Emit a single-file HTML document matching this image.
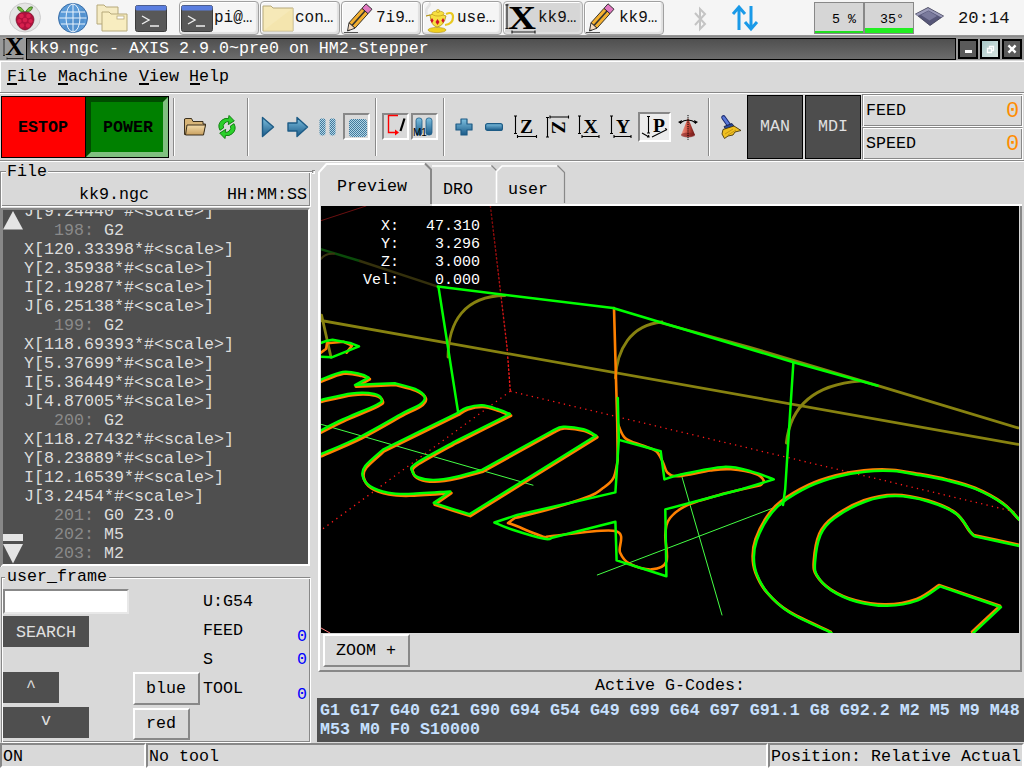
<!DOCTYPE html>
<html><head><meta charset="utf-8">
<style>
*{margin:0;padding:0;box-sizing:border-box}
html,body{width:1024px;height:768px;overflow:hidden;background:#d9d9d9;position:relative;font-family:"Liberation Mono",monospace;font-size:16.67px;color:#000}
.a{position:absolute}
.t{position:absolute;white-space:pre;line-height:1}
svg{position:absolute;overflow:visible}
.tb{position:absolute;top:1px;height:34px;background:#f5f5f5;border:1px solid #a0a0a0;border-radius:4px;box-shadow:inset -2px -2px 1px #e0e0e0, inset 1px 1px 0 #fff}
.tbt{position:absolute;top:10px;font-size:16px;color:#111;white-space:pre;line-height:1}
</style></head><body>
<!-- ===== taskbar ===== -->
<div class="a" style="left:0;top:0;width:1024px;height:35px;background:#f5f5f5"></div>
<div class="a" style="left:0;top:35px;width:1024px;height:3px;background:linear-gradient(#9a9a9a,#7a7a7a)"></div>
<!-- raspberry -->
<svg style="left:9px;top:3px" width="32" height="29" viewBox="0 0 32 29">
 <ellipse cx="16" cy="14.5" rx="15.5" ry="14.5" fill="#e4e4e4" stroke="#c4c4c4" stroke-width="0.8"/>
 <path d="M15.5 9 Q12 3 8.5 4 Q9 9 15.5 9Z M16.5 9 Q20 3 23.5 4 Q23 9 16.5 9Z" fill="#76c043" stroke="#2e5a18" stroke-width="0.7"/>
 <path d="M16 9 C10 9 7 12.5 7 17 C7.5 22 11.5 26.5 16 27 C20.5 26.5 24.5 22 25 17 C25 12.5 22 9 16 9Z" fill="#b0103c" stroke="#6a0a24" stroke-width="0.6"/>
 <g fill="#d8204e"><circle cx="12.5" cy="13" r="2.3"/><circle cx="19.5" cy="13" r="2.3"/><circle cx="16" cy="17" r="2.3"/><circle cx="10.5" cy="18" r="2.1"/><circle cx="21.5" cy="18" r="2.1"/><circle cx="13" cy="22.5" r="2.2"/><circle cx="19" cy="22.5" r="2.2"/></g>
</svg>
<!-- globe -->
<svg style="left:58px;top:3px" width="30" height="30" viewBox="0 0 30 30">
 <circle cx="15" cy="15" r="14.5" fill="#5b9bd8" stroke="#3a6ea8" stroke-width="1"/>
 <path d="M25 5 L5 25 A14.5 14.5 0 0 0 25 5Z" fill="#4e8ac8" opacity="0.6"/>
 <g stroke="#e8f2fc" stroke-width="1" fill="none"><path d="M15 1V29M1.5 15H28.5M3 9H27M3 21H27"/><ellipse cx="15" cy="15" rx="7" ry="14"/></g>
</svg>
<!-- folders -->
<svg style="left:96px;top:4px" width="32" height="28" viewBox="0 0 32 28">
 <path d="M1 1H8L10 3H22V20H1Z" fill="#f5ebc4" stroke="#b6a97a" stroke-width="1"/>
 <path d="M6 8H13L15 10H31V27H6Z" fill="#f8edc0" stroke="#b6a97a" stroke-width="1"/>
 <rect x="21" y="12" width="7" height="3" fill="#fff" stroke="#b6a97a" stroke-width="0.8"/>
</svg>
<!-- terminal -->
<svg style="left:135px;top:5px" width="32" height="27" viewBox="0 0 32 27">
 <rect x="0.5" y="0.5" width="31" height="26" rx="2" fill="#585858" stroke="#3c3c3c"/>
 <rect x="0.5" y="0.5" width="31" height="5" rx="1.5" fill="#5a7ee0"/>
 <path d="M7 11L14 15L7 19M15 21H24" stroke="#eee" stroke-width="1.4" fill="none"/>
</svg>
<!-- task buttons -->
<div class="tb" style="left:179px;width:80px"></div>
<svg style="left:181px;top:5px" width="32" height="27" viewBox="0 0 32 27">
 <rect x="0.5" y="0.5" width="31" height="26" rx="2" fill="#585858" stroke="#3c3c3c"/>
 <rect x="0.5" y="0.5" width="31" height="5" rx="1.5" fill="#5a7ee0"/>
 <path d="M7 11L14 15L7 19M15 21H24" stroke="#eee" stroke-width="1.4" fill="none"/>
</svg>
<div class="tbt" style="left:214px">pi@…</div>
<div class="tb" style="left:260px;width:80px"></div>
<svg style="left:262px;top:5px" width="32" height="27" viewBox="0 0 32 27">
 <path d="M1 1H9L11 3H31V26H1Z" fill="#f6e9b8" stroke="#b6a97a" stroke-width="1"/>
 <path d="M1 26L31 3V26Z" fill="#f3e2a6" opacity="0.6"/>
</svg>
<div class="tbt" style="left:295px">con…</div>
<div class="tb" style="left:341px;width:80px"></div>
<svg style="left:344px;top:2px" width="28" height="30" viewBox="0 0 28 30">
 <path d="M5 20.8 L11 26.2 L24 11.7 L18 6.3Z" fill="#f4b030" stroke="#222" stroke-width="0.9"/>
 <path d="M8 23.5 L21 9" stroke="#333" stroke-width="1.6"/>
 <path d="M18 6.3 L24 11.7 L28 7.2 L22 1.8Z" fill="#e078c0" stroke="#222" stroke-width="0.9"/>
 <path d="M5 20.8 L11 26.2 L3.5 29Z" fill="#f6dcc0" stroke="#222" stroke-width="0.9"/>
 <path d="M3.5 29 L5 27.5 L6 28.3Z" fill="#222"/><path d="M0 30.5 H14" stroke="#444" stroke-width="0.9"/>
</svg>
<div class="tbt" style="left:376px">7i9…</div>
<div class="tb" style="left:422px;width:80px"></div>
<svg style="left:424px;top:2px" width="32" height="31" viewBox="0 0 32 31">
 <path d="M3 13 Q1 8 4 5 Q7 2 5 1" stroke="#e4e4e4" stroke-width="2.6" fill="none"/>
 <ellipse cx="13" cy="28" rx="9" ry="2.6" fill="#f0d020" stroke="#b09010" stroke-width="0.6"/>
 <path d="M2 14 L6 13 Q7 24 13 25 Q20 24 22 14 Q13 10 6 13Z" fill="#f8e040" stroke="#b09010" stroke-width="0.8"/>
 <path d="M22 12 Q29 9 29 15 Q29 22 21 23" stroke="#e8c820" stroke-width="2.2" fill="none"/>
 <ellipse cx="14" cy="11.5" rx="6" ry="2.5" fill="#f8e040" stroke="#b09010" stroke-width="0.6"/>
 <circle cx="14" cy="9" r="1.6" fill="#f8e040" stroke="#b09010" stroke-width="0.5"/>
 <g fill="#d0102a"><path d="M8 16L9.6 18.5L8 21L6.4 18.5Z"/><path d="M13.5 17L15.5 20L13.5 23L11.5 20Z"/><path d="M19 16L20.6 18.5L19 21L17.4 18.5Z"/></g>
</svg>
<div class="tbt" style="left:457px">use…</div>
<div class="tb" style="left:503px;width:80px;background:#d6d6d6;border-color:#b0b0b0"></div>
<svg style="left:505px;top:4px" width="32" height="31" viewBox="0 0 32 31">
 <text x="17" y="24.5" font-family="Liberation Serif" font-weight="bold" font-size="33" text-anchor="middle" textLength="28" lengthAdjust="spacingAndGlyphs">X</text>
 <path d="M2 0.8V24.5M0.5 0.8H3.5M0.5 24.5H3.5M7 28H30M7 26.5V29.5M30 26.5V29.5" stroke="#222" stroke-width="1.2" fill="none"/>
</svg>
<div class="tbt" style="left:538px">kk9…</div>
<div class="tb" style="left:584px;width:80px"></div>
<svg style="left:586px;top:2px" width="28" height="30" viewBox="0 0 28 30">
 <path d="M5 20.8 L11 26.2 L24 11.7 L18 6.3Z" fill="#f4b030" stroke="#222" stroke-width="0.9"/>
 <path d="M8 23.5 L21 9" stroke="#333" stroke-width="1.6"/>
 <path d="M18 6.3 L24 11.7 L28 7.2 L22 1.8Z" fill="#e078c0" stroke="#222" stroke-width="0.9"/>
 <path d="M5 20.8 L11 26.2 L3.5 29Z" fill="#f6dcc0" stroke="#222" stroke-width="0.9"/>
 <path d="M3.5 29 L5 27.5 L6 28.3Z" fill="#222"/><path d="M0 30.5 H14" stroke="#444" stroke-width="0.9"/>
</svg>
<div class="tbt" style="left:619px">kk9…</div>
<!-- bluetooth -->
<svg style="left:692px;top:7px" width="16" height="24" viewBox="0 0 16 24">
 <path d="M3 6L13 17L8 22V2L13 7L3 18" stroke="#c4c4c4" stroke-width="2" fill="none"/>
</svg>
<!-- network arrows -->
<svg style="left:732px;top:5px" width="26" height="26" viewBox="0 0 26 26">
 <path d="M7 25V3M1 9L7 2L13 9M19 1V23M13 17L19 24L25 17" stroke="#1a9ae8" stroke-width="3" fill="none"/>
</svg>
<!-- cpu / temp -->
<div class="a" style="left:814px;top:2px;width:50px;height:32px;background:#d6d6d6;border:1px solid #888"></div>
<div class="a" style="left:815px;top:31px;width:48px;height:2px;background:#22dd22"></div>
<div class="a" style="left:864px;top:2px;width:50px;height:32px;background:#d6d6d6;border:1px solid #888"></div>
<div class="a" style="left:865px;top:28px;width:48px;height:5px;background:#22ee22"></div>
<div class="t" style="left:832px;top:13px;font-size:13.3px">5 %</div>
<div class="t" style="left:880px;top:13px;font-size:13.3px">35°</div>
<!-- cpu icon -->
<svg style="left:915px;top:7px" width="29" height="19" viewBox="0 0 29 19">
 <path d="M0.5 7 L13 0.5 L28.5 9 L15 18.5Z" fill="#565678" stroke="#3a3a52" stroke-width="0.8"/>
 <path d="M1 7 L13 1 L28 9 L26.5 10.5 L13.5 3.5 L2.5 9Z" fill="#9a9ab8"/>
 <path d="M6 8 L13.5 4 L22 9 L14.5 13.5Z" fill="#7a7a9c"/>
</svg>
<div class="t" style="left:958px;top:10px;font-size:17.2px;color:#111">20:14</div>

<!-- ===== title bar ===== -->
<div class="a" style="left:0;top:37px;width:1024px;height:23px;background:#9a9a9a"></div>
<svg style="left:2px;top:38px" width="22" height="22" viewBox="0 0 22 22">
 <text x="12.5" y="17.3" font-family="Liberation Serif" font-weight="bold" font-size="25.5" text-anchor="middle" textLength="18.5" lengthAdjust="spacingAndGlyphs">X</text>
 <path d="M2 1.5V17.5M1 1.5H3M1 17.5H3M5 20.5H21M5 19.5V21.5M21 19.5V21.5" stroke="#222" stroke-width="0.9" fill="none"/>
</svg>
<div class="a" style="left:26px;top:38px;width:930px;height:22px;background:linear-gradient(#4f4f4f,#6c6c6c);border:1px solid #000"></div>
<div class="t" style="left:29px;top:41px;color:#fff">kk9.ngc - AXIS 2.9.0~pre0 on HM2-Stepper</div>
<div class="a" style="left:958px;top:39px;width:20px;height:20px;background:#5a5a5a;border:2px solid #000"></div>
<div class="a" style="left:965px;top:50px;width:7px;height:3px;background:#fff"></div>
<div class="a" style="left:980px;top:39px;width:20px;height:20px;background:linear-gradient(135deg,#a8c8c8,#d8e4e0);border:2px solid #000"></div>
<svg style="left:980px;top:39px" width="20" height="20" viewBox="0 0 20 20"><path d="M7.5 9.5H11.5V13.5H7.5Z M9.5 9.5V7.5H13.5V11.5H11.5" stroke="#fff" stroke-width="1.3" fill="none"/></svg>
<div class="a" style="left:1002px;top:39px;width:20px;height:20px;background:#5a5a5a;border:2px solid #000"></div>
<svg style="left:1002px;top:39px" width="20" height="20" viewBox="0 0 20 20"><path d="M7.3 7.3L12.7 12.7M12.7 7.3L7.3 12.7" stroke="#fff" stroke-width="2.4" stroke-linecap="square"/></svg>

<!-- ===== menubar ===== -->
<div class="a" style="left:0;top:61px;width:1024px;height:1px;background:#fff"></div>
<div class="a" style="left:0;top:61px;width:1px;height:32px;background:#fff"></div>
<div class="a" style="left:0;top:92px;width:1024px;height:1px;background:#888"></div>
<div class="a" style="left:0;top:93px;width:1024px;height:1px;background:#fff"></div>
<div class="t" style="left:7px;top:69px">File</div><div class="t" style="left:58px;top:69px">Machine</div><div class="t" style="left:139px;top:69px">View</div><div class="t" style="left:189px;top:69px">Help</div>
<div class="a" style="left:7px;top:83px;width:10px;height:2px;background:#000"></div>
<div class="a" style="left:58px;top:83px;width:10px;height:2px;background:#000"></div>
<div class="a" style="left:139px;top:83px;width:10px;height:2px;background:#000"></div>
<div class="a" style="left:190px;top:83px;width:10px;height:2px;background:#000"></div>

<!-- ===== toolbar ===== -->
<div class="a" style="left:1px;top:96px;width:85px;height:62px;background:#f00;border:1px solid #000"></div>
<div class="t" style="left:18px;top:120px;font-weight:bold">ESTOP</div>
<div class="a" style="left:85px;top:96px;width:84px;height:62px;background:#008000;border:1px solid #000;border-right:none"></div>
<div class="a" style="left:86px;top:97px;width:82px;height:60px;border-style:solid;border-width:5px;border-color:#004c00 #80c080 #80c080 #004c00"></div>
<div class="a" style="left:168px;top:96px;width:1px;height:62px;background:#000"></div>
<div class="t" style="left:103px;top:120px;font-weight:bold">POWER</div>
<div class="a" style="left:0;top:160px;width:1024px;height:1px;background:#888"></div>
<div class="a" style="left:0;top:161px;width:1024px;height:1px;background:#fff"></div>

<!-- separators -->
<div class="a" style="left:173px;top:98px;width:1px;height:58px;background:#8a8a8a;box-shadow:1px 0 0 #fff"></div>
<div class="a" style="left:247px;top:98px;width:1px;height:58px;background:#8a8a8a;box-shadow:1px 0 0 #fff"></div>
<div class="a" style="left:375px;top:98px;width:1px;height:58px;background:#8a8a8a;box-shadow:1px 0 0 #fff"></div>
<div class="a" style="left:443px;top:98px;width:1px;height:58px;background:#8a8a8a;box-shadow:1px 0 0 #fff"></div>
<div class="a" style="left:708px;top:98px;width:1px;height:58px;background:#8a8a8a;box-shadow:1px 0 0 #fff"></div>
<!-- open folder -->
<svg style="left:184px;top:117px" width="22" height="19" viewBox="0 0 22 19">
 <defs><linearGradient id="fg" x1="0" y1="0" x2="0" y2="1"><stop offset="0" stop-color="#f4dcaa"/><stop offset="1" stop-color="#c8a060"/></linearGradient></defs>
 <path d="M0.5 2V17.5H19L21.5 7H19V4.5H9L7.5 1.5H2Z" fill="#d8b578" stroke="#2a2010" stroke-width="0.9"/>
 <path d="M3 8H21.5L19.5 18H1.5Z" fill="url(#fg)" stroke="#2a2010" stroke-width="0.9"/>
</svg>
<!-- reload -->
<svg style="left:216px;top:115px" width="22" height="24" viewBox="0 0 22 24">
 <g transform="rotate(-40 11 12)">
 <path d="M3.5 10 Q5 3.5 11.5 3.5 Q15.5 3.5 17.5 6.5 L20 4.5 L20.5 12 L13.5 11 L15.8 9 Q14.5 7.5 12 7.5 Q8.5 7.5 7.8 10.5Z" fill="#2ad02a" stroke="#108010" stroke-width="0.9" stroke-linejoin="round"/>
 <path d="M18.5 14 Q17 20.5 10.5 20.5 Q6.5 20.5 4.5 17.5 L2 19.5 L1.5 12 L8.5 13 L6.2 15 Q7.5 16.5 10 16.5 Q13.5 16.5 14.2 13.5Z" fill="#2ad02a" stroke="#108010" stroke-width="0.9" stroke-linejoin="round"/>
 </g>
</svg>
<!-- play -->
<svg style="left:261px;top:116px" width="14" height="22" viewBox="0 0 14 22">
 <defs><linearGradient id="bg1" x1="0" y1="0" x2="0" y2="1"><stop offset="0" stop-color="#7ec0e0"/><stop offset="1" stop-color="#1a5a88"/></linearGradient></defs>
 <path d="M1.5 1.5 L12.5 11 L1.5 20.5Z" fill="url(#bg1)" stroke="#1d5b85" stroke-width="1.4" stroke-linejoin="round"/>
</svg>
<!-- step -->
<svg style="left:287px;top:116px" width="22" height="22" viewBox="0 0 22 22">
 <path d="M1 7 H10 V1.5 L20.5 11 L10 20.5 V15 H1Z" fill="url(#bg1)" stroke="#1d5b85" stroke-width="1.4" stroke-linejoin="round"/>
</svg>
<!-- pause -->
<svg style="left:319px;top:118px" width="18" height="18" viewBox="0 0 18 18">
 <defs><pattern id="dots" width="2" height="2" patternUnits="userSpaceOnUse"><rect width="1" height="1" fill="#2a6890"/><rect x="1" y="1" width="1" height="1" fill="#2a6890"/><rect x="1" width="1" height="1" fill="#a8d4ea"/><rect y="1" width="1" height="1" fill="#a8d4ea"/></pattern></defs>
 <rect x="0.5" y="0.5" width="6" height="17" rx="2" fill="url(#dots)" opacity="0.85"/>
 <rect x="10.5" y="0.5" width="6" height="17" rx="2" fill="url(#dots)" opacity="0.85"/>
</svg>
<!-- stop (sunken) -->
<div class="a" style="left:343px;top:113px;width:27px;height:27px;border:2px solid;border-color:#888 #fff #fff #888"></div>
<svg style="left:349px;top:119px" width="18" height="18" viewBox="0 0 18 18"><rect x="0" y="0" width="18" height="18" rx="3" fill="url(#dots)" opacity="0.85"/></svg>
<!-- block delete (sunken) -->
<div class="a" style="left:382px;top:113px;width:27px;height:27px;border:2px solid;border-color:#888 #fff #fff #888"></div>
<svg style="left:382px;top:113px" width="27" height="27" viewBox="0 0 27 27">
 <path d="M16 2.5 H6.5 V19.5 H14" stroke="#f00" stroke-width="1.4" fill="none"/><path d="M13 16.5 L17 19.5 L13 22.5Z" fill="#f00"/>
 <path d="M22.5 5.5 L18.5 18" stroke="#000" stroke-width="2.2"/>
</svg>
<!-- optional stop (sunken) -->
<div class="a" style="left:411px;top:113px;width:27px;height:27px;border:2px solid;border-color:#888 #fff #fff #888"></div>
<svg style="left:411px;top:113px" width="27" height="27" viewBox="0 0 27 27">
 <rect x="5" y="5" width="6" height="17" rx="2.5" fill="url(#bg1)" stroke="#1d5b85" stroke-width="0.8"/>
 <rect x="15" y="5" width="6" height="17" rx="2.5" fill="url(#bg1)" stroke="#1d5b85" stroke-width="0.8"/>
 <text x="2" y="23" font-family="Liberation Sans" font-size="10" fill="#000">M1</text>
</svg>
<!-- plus / minus -->
<svg style="left:455px;top:118px" width="18" height="18" viewBox="0 0 18 18">
 <path d="M6 1 H12 V6 H17 V12 H12 V17 H6 V12 H1 V6 H6Z" fill="url(#bg1)" stroke="#1d5b85" stroke-width="1.2" stroke-linejoin="round"/>
</svg>
<svg style="left:485px;top:123px" width="18" height="8" viewBox="0 0 18 8">
 <rect x="0.6" y="0.6" width="16.8" height="6.8" rx="2" fill="url(#bg1)" stroke="#1d5b85" stroke-width="1.2"/>
</svg>
<!-- view icons -->
<svg style="left:513px;top:114px" width="26" height="26" viewBox="0 0 26 26">
 <path d="M2.5 2V19.5M1 2H4M1 19.5H4M4.5 22.5H23.5M4.5 21V24M23.5 21V24" stroke="#000" stroke-width="1.1" fill="none"/>
 <text x="13.5" y="18.5" font-family="Liberation Serif" font-weight="bold" font-size="19.5" text-anchor="middle" style="-webkit-font-smoothing:antialiased">Z</text>
</svg>
<svg style="left:545px;top:114px" width="26" height="26" viewBox="0 0 26 26">
 <path d="M2.5 3.5V23M1 3.5H4M1 23H4M5 3H23.5M5 1.5V4.5M23.5 1.5V4.5" stroke="#000" stroke-width="1.1" fill="none"/>
 <text x="13.5" y="20" font-family="Liberation Serif" font-weight="bold" font-size="19.5" text-anchor="middle" transform="rotate(90 13.5 13.5)">Z</text>
</svg>
<svg style="left:577px;top:114px" width="26" height="26" viewBox="0 0 26 26">
 <path d="M2.5 2V19.5M1 2H4M1 19.5H4M5 22.5H22M5 21V24M22 21V24" stroke="#000" stroke-width="1.1" fill="none"/>
 <text x="13.5" y="18.5" font-family="Liberation Serif" font-weight="bold" font-size="19.5" text-anchor="middle">X</text>
</svg>
<svg style="left:609px;top:114px" width="26" height="26" viewBox="0 0 26 26">
 <path d="M2.5 2V19.5M1 2H4M1 19.5H4M5 22.5H22M5 21V24M22 21V24" stroke="#000" stroke-width="1.1" fill="none"/>
 <text x="14" y="18.5" font-family="Liberation Serif" font-weight="bold" font-size="19.5" text-anchor="middle">Y</text>
</svg>
<!-- P (sunken) -->
<div class="a" style="left:638px;top:112px;width:33px;height:30px;border:2px solid;border-color:#888 #fff #fff #888;background:#ececec"></div>
<svg style="left:638px;top:112px" width="33" height="30" viewBox="0 0 33 30">
 <path d="M10.5 4.5V21M9 4.5H12M9 21H12M4 21L11 25M9 25L11 25L10.5 23M14 25L29 17.5M27 16.5L29 17.5" stroke="#000" stroke-width="1.1" fill="none"/>
 <text x="21" y="20" font-family="Liberation Serif" font-weight="bold" font-size="19.5" text-anchor="middle">P</text>
</svg>
<!-- rotate cone -->
<svg style="left:677px;top:115px" width="22" height="25" viewBox="0 0 22 25">
 <defs><linearGradient id="cone" x1="0" y1="0" x2="1" y2="0"><stop offset="0" stop-color="#f0a090"/><stop offset="0.5" stop-color="#d05040"/><stop offset="1" stop-color="#601010"/></linearGradient></defs>
 <path d="M11 3 L18 20 Q11 24 4 20Z" fill="url(#cone)"/>
 <ellipse cx="11" cy="20" rx="7" ry="2.5" fill="#802020" opacity="0.6"/>
 <path d="M3 8 Q11 2 19 8" stroke="#000" stroke-width="1.2" fill="none"/><path d="M1 7L4 9L5 5Z M21 7L18 9L17 5Z" fill="#000"/>
 <path d="M11 0V25" stroke="#000" stroke-width="1" stroke-dasharray="1.2 1"/>
</svg>
<!-- broom -->
<svg style="left:720px;top:115px" width="22" height="24" viewBox="0 0 22 24">
 <path d="M3.5 2.5 L9.5 11" stroke="#1a2a70" stroke-width="4.6" stroke-linecap="round"/>
 <path d="M3.5 2.5 L9.5 11" stroke="#5a78d8" stroke-width="2.6" stroke-linecap="round"/>
 <path d="M4 11.5 L12 8.5 L14.5 12 L6 15Z" fill="#2a4a9a" stroke="#101840" stroke-width="0.8"/>
 <path d="M3 14.5 L14 11 L21 15.5 L15 17 L13 20 L8 21 L4.5 23.5 L2 19Z" fill="#f0c020" stroke="#4a3808" stroke-width="0.9" stroke-linejoin="round"/>
 <path d="M5 19 L13 14 M8 20 L16 15" stroke="#b88a10" stroke-width="0.8"/>
</svg>
<!-- MAN / MDI -->
<div class="a" style="left:747px;top:95px;width:56px;height:64px;background:#4d4d4d;border:1px solid #000"></div>
<div class="t" style="left:760px;top:119px;color:#e0e0e0">MAN</div>
<div class="a" style="left:805px;top:95px;width:56px;height:64px;background:#4d4d4d;border:1px solid #000"></div>
<div class="t" style="left:818px;top:119px;color:#e0e0e0">MDI</div>
<!-- FEED / SPEED -->
<div class="a" style="left:862px;top:94px;width:161px;height:33px;border:1px solid;border-color:#888 #fff #fff #888;box-shadow:inset 1px 1px 0 #fff, inset -1px -1px 0 #888"></div>
<div class="t" style="left:866px;top:103px">FEED</div>
<div class="t" style="left:1006px;top:101px;color:#ff8c00;font-size:22px">0</div>
<div class="a" style="left:862px;top:127px;width:161px;height:33px;border:1px solid;border-color:#888 #fff #fff #888;box-shadow:inset 1px 1px 0 #fff, inset -1px -1px 0 #888"></div>
<div class="t" style="left:866px;top:136px">SPEED</div>
<div class="t" style="left:1006px;top:134px;color:#ff8c00;font-size:22px">0</div>
<!-- ===== left panel ===== -->
<!-- File frame groove -->
<div class="a" style="left:0;top:171px;width:313px;height:1px;background:#888"></div>
<div class="a" style="left:1px;top:172px;width:312px;height:1px;background:#fff"></div>
<div class="a" style="left:0;top:171px;width:1px;height:396px;background:#888"></div>
<div class="a" style="left:1px;top:172px;width:1px;height:395px;background:#fff"></div>
<div class="a" style="left:312px;top:170px;width:3px;height:1px;background:#888"></div>
<div class="a" style="left:312px;top:170px;width:1px;height:3px;background:#888"></div>
<div class="a" style="left:314px;top:171px;width:1px;height:3px;background:#fff"></div>
<div class="a" style="left:312px;top:173px;width:3px;height:1px;background:#fff"></div>
<div class="a" style="left:6px;top:163px;width:42px;height:14px;background:#d9d9d9"></div>
<div class="t" style="left:7px;top:164px">File</div>
<!-- header -->
<div class="a" style="left:2px;top:205px;width:308px;height:1px;background:#888"></div>
<div class="a" style="left:2px;top:206px;width:309px;height:1px;background:#fff"></div>
<div class="a" style="left:309px;top:173px;width:1px;height:33px;background:#888"></div>
<div class="a" style="left:310px;top:172px;width:1px;height:35px;background:#fff"></div>
<div class="t" style="left:79px;top:187px">kk9.ngc</div>
<div class="t" style="left:227px;top:187px">HH:MM:SS</div>
<!-- text area -->
<div class="a" style="left:1px;top:208px;width:309px;height:358px;border-style:solid;border-width:2px 2px 2px 2px;border-color:#888 #fff #fff #888"></div>
<div class="a" style="left:3px;top:210px;width:305px;height:354px;background:#4f4f4f;overflow:hidden">
<div style="position:absolute;left:21px;top:-8px;color:#dcdcdc;line-height:19px;white-space:pre">J[9.24440*#&lt;scale&gt;]
<span style="color:#8a8a8a">   198:</span> G2
X[120.33398*#&lt;scale&gt;]
Y[2.35938*#&lt;scale&gt;]
I[2.19287*#&lt;scale&gt;]
J[6.25138*#&lt;scale&gt;]
<span style="color:#8a8a8a">   199:</span> G2
X[118.69393*#&lt;scale&gt;]
Y[5.37699*#&lt;scale&gt;]
I[5.36449*#&lt;scale&gt;]
J[4.87005*#&lt;scale&gt;]
<span style="color:#8a8a8a">   200:</span> G2
X[118.27432*#&lt;scale&gt;]
Y[8.23889*#&lt;scale&gt;]
I[12.16539*#&lt;scale&gt;]
J[3.2454*#&lt;scale&gt;]
<span style="color:#8a8a8a">   201:</span> G0 Z3.0
<span style="color:#8a8a8a">   202:</span> M5
<span style="color:#8a8a8a">   203:</span> M2</div>
</div>
<svg style="left:3px;top:210px" width="24" height="354" viewBox="0 0 24 354">
 <path d="M0 19.5 L10 1 L20 19.5Z" fill="#e4e4e4"/>
 <rect x="0" y="324" width="20" height="7" fill="#e4e4e4"/>
 <path d="M0 334 L20 334 L10 353.5Z" fill="#e4e4e4"/>
</svg>

<!-- user_frame -->
<div class="a" style="left:1px;top:577px;width:310px;height:166px;border:1px solid;border-color:#888 #fff #fff #888;box-shadow:inset 1px 1px 0 #fff, inset -1px -1px 0 #888"></div>
<div class="a" style="left:5px;top:569px;width:104px;height:14px;background:#d9d9d9"></div>
<div class="t" style="left:7px;top:569px">user_frame</div>
<div class="a" style="left:3px;top:589px;width:126px;height:25px;background:#fff;border:2px solid;border-color:#888 #e8e8e8 #e8e8e8 #888"></div>
<div class="a" style="left:3px;top:616px;width:86px;height:31px;background:#4f4f4f"></div>
<div class="t" style="left:16px;top:625px;color:#e0e0e0">SEARCH</div>
<div class="a" style="left:3px;top:672px;width:56px;height:31px;background:#4f4f4f"></div>
<div class="t" style="left:26px;top:680px;color:#e0e0e0">^</div>
<div class="a" style="left:3px;top:707px;width:86px;height:31px;background:#4f4f4f"></div>
<div class="t" style="left:41px;top:713px;color:#e0e0e0">v</div>
<div class="a" style="left:133px;top:672px;width:67px;height:33px;border:2px solid;border-color:#fff #888 #888 #fff"></div>
<div class="t" style="left:146px;top:681px">blue</div>
<div class="a" style="left:133px;top:708px;width:57px;height:32px;border:2px solid;border-color:#fff #888 #888 #fff"></div>
<div class="t" style="left:146px;top:716px">red</div>
<div class="t" style="left:203px;top:594px">U:G54</div>
<div class="t" style="left:203px;top:623px">FEED</div>
<div class="t" style="left:203px;top:652px">S</div>
<div class="t" style="left:203px;top:681px">TOOL</div>
<div class="t" style="left:297px;top:629px;color:#0000ff">0</div>
<div class="t" style="left:297px;top:652px;color:#0000ff">0</div>
<div class="t" style="left:297px;top:687px;color:#0000ff">0</div>

<!-- status bar -->
<div class="a" style="left:0;top:743px;width:146px;height:25px;border:2px solid;border-color:#888 #fff #fff #888"></div>
<div class="t" style="left:3px;top:749px">ON</div>
<div class="a" style="left:146px;top:743px;width:622px;height:25px;border:2px solid;border-color:#888 #fff #fff #888"></div>
<div class="t" style="left:149px;top:749px">No tool</div>
<div class="a" style="left:768px;top:743px;width:256px;height:25px;border:2px solid;border-color:#888 #fff #fff #888"></div>
<div class="t" style="left:771px;top:749px">Position: Relative Actual</div>

<!-- ===== notebook ===== -->
<div class="a" style="left:318px;top:205px;width:704px;height:467px;border-left:2px solid #fff;border-right:2px solid #888;border-bottom:2px solid #888"></div>
<div class="a" style="left:431px;top:204px;width:591px;height:2px;background:#fff"></div>
<!-- tabs -->
<svg style="left:316px;top:162px" width="260" height="46" viewBox="0 0 260 46">
 <path d="M116 41 V3 H175 L182 10 V41Z" fill="#d9d9d9"/>
 <path d="M116 4 H175" stroke="#fff" stroke-width="1.6" fill="none"/>
 <path d="M175.5 3.5 L182.5 10.5 V41" stroke="#888" stroke-width="1.2" fill="none"/>
 <path d="M180 41 V9 L186 3 H241 L248 10 V41Z" fill="#d9d9d9"/>
 <path d="M180.5 41 V9.5 L186 4 H241" stroke="#fff" stroke-width="1.6" fill="none"/>
 <path d="M241.5 3.5 L248.5 10.5 V41" stroke="#888" stroke-width="1.2" fill="none"/>
 <path d="M2 44 V10 L10 1 H109 L116 8 V44Z" fill="#d9d9d9"/>
 <path d="M3 44 V10.4 L10.4 2 H109" stroke="#fff" stroke-width="2" fill="none"/>
 <path d="M109 1.5 L115 7.5 V42" stroke="#888" stroke-width="2" fill="none"/>
</svg>
<div class="t" style="left:337px;top:179px">Preview</div>
<div class="t" style="left:443px;top:182px">DRO</div>
<div class="t" style="left:508px;top:182px">user</div>
<!-- preview -->
<div class="a" style="left:321px;top:206px;width:698px;height:427px;background:#000;overflow:hidden" id="pv">
<svg style="left:-321px;top:-206px" width="1024" height="768" viewBox="0 0 1024 768" fill="none" stroke-linejoin="round" stroke-linecap="round">
<path d="M320 221 L366 206" stroke="#6a1010" stroke-width="1"/>
<defs><linearGradient id="rg" gradientUnits="userSpaceOnUse" x1="0" y1="206" x2="0" y2="391"><stop offset="0" stop-color="#7a0808"/><stop offset="1" stop-color="#ff1a1a"/></linearGradient></defs><path d="M490.4 206 L507 347 L510.3 391.2" stroke="url(#rg)" stroke-width="1.4" stroke-dasharray="1.4 2.6"/><g stroke="#ff1a1a" stroke-width="1.3" stroke-dasharray="1.3 4.2" stroke-linecap="butt"><path d="M510.3 391.2 L1018 512.5"/><path d="M510.3 391.2 L320 530.9"/></g>
<path d="M321 628 L330 633" stroke="#ff8080" stroke-width="1"/>
<path d="M320 249 L360 261" stroke="#0a4a0a" stroke-width="2.5"/><path d="M360 261 L437.8 286.6" stroke="#34300c" stroke-width="2.5"/><path d="M321 259 Q325 253 334 253.7" stroke="#3a3510" stroke-width="2"/>
<g stroke="#878210" stroke-width="2.8"><path d="M320 320.3 L1018 444.3"/><path d="M658 322 L749 347 L877.7 385.7 L1018 427.9"/><path d="M321.6 315.2 L331 357.3"/><path d="M448 357 C448.5 322 464 296 505 295.5"/><path d="M615.4 378 C617 350 630 325 662 322"/><path d="M786.3 443 C790 410 810 385 860 381"/></g>
<g stroke="#44ff44" stroke-width="1"><path d="M320 424 L533 485.2"/><path d="M597.3 575 L781 505"/><path d="M681.1 473.9 L722 615"/></g>
<g stroke="#ff8000" stroke-width="3" transform="translate(-1.1 -1.2)"><path d="M831.7 633.0 C824.8 629.6 800.6 619.4 790.0 612.8 C779.4 606.2 773.3 599.8 767.8 593.3 C762.2 586.8 759.0 579.9 756.7 573.9 C754.4 567.9 753.9 562.8 753.9 557.2 C753.9 551.6 754.4 547.0 756.7 540.5 C759.0 534.0 763.6 524.5 767.8 518.3 C772.0 512.0 774.8 508.3 781.7 503.0 C788.6 497.7 800.2 490.8 809.4 486.4 C818.6 482.0 827.7 479.1 837.0 476.7 C846.3 474.2 855.7 472.6 865.0 471.7 C874.3 470.8 883.5 470.5 892.8 471.1 C902.0 471.7 911.2 473.7 920.5 475.3 C929.8 476.9 939.0 478.5 948.3 480.8 C957.5 483.1 966.7 485.3 976.0 489.2 C985.3 493.1 996.6 499.2 1003.9 504.4 C1011.2 509.6 1017.3 517.8 1020.0 520.5"/><path d="M1020.0 546.1 C1012.5 544.5 982.2 538.0 974.7 536.4 C974.0 535.7 973.6 535.9 970.6 532.2 C967.6 528.5 963.7 519.3 956.7 514.2 C949.8 509.1 939.1 504.7 928.9 501.7 C918.7 498.7 906.2 496.1 895.6 496.1 C885.0 496.1 875.2 498.0 865.0 501.7 C854.8 505.4 841.8 512.8 834.4 518.3 C827.0 523.8 823.7 527.6 820.5 535.0 C817.3 542.4 815.5 555.8 815.0 562.8 C814.5 569.8 815.0 572.1 817.8 576.7 C820.6 581.3 825.2 586.4 831.7 590.6 C838.2 594.8 847.5 599.2 856.7 601.7 C866.0 604.2 877.0 606.0 887.2 605.8 C897.4 605.6 909.0 603.5 917.8 600.3 C926.6 597.1 936.3 588.7 940.0 586.4 C950.2 589.9 990.8 603.7 1001.0 607.2 C996.4 611.5 977.9 628.7 973.3 633.0"/></g>
<g stroke="#ff8000" stroke-width="3" transform="translate(1 1.6)"><path d="M320.0 380.0 C323.8 378.7 335.9 373.0 342.7 372.0 C349.5 371.0 356.5 373.3 360.8 374.2 C365.1 375.1 367.4 377.0 368.7 377.6 C366.4 378.8 357.3 383.8 355.0 385.0 C361.6 384.7 388.2 383.5 394.8 383.2 C398.2 384.2 410.0 386.7 415.0 389.0 C420.0 391.3 423.9 394.2 424.7 396.8 C425.5 399.4 423.2 402.2 419.7 404.8 C416.2 407.4 413.6 407.4 403.8 412.7 C394.0 418.0 374.8 429.5 360.8 436.5 C346.8 443.5 326.8 451.6 320.0 454.6"/><path d="M320.0 400.2 C325.3 399.1 342.6 394.4 351.7 393.4 C360.8 392.3 369.4 392.9 374.4 393.9 C379.4 394.9 381.2 397.8 381.6 399.6 C382.0 401.4 383.1 401.5 376.6 404.8 C370.1 408.1 352.1 415.2 342.7 419.5 C333.3 423.8 323.8 428.9 320.0 430.8"/><path d="M457.9 412.8 C459.4 411.9 462.8 409.0 466.8 407.7 C470.8 406.4 476.9 405.0 482.0 405.2 C487.1 405.4 492.6 407.5 497.2 409.0 C501.8 410.5 507.8 413.2 509.9 414.0 C501.0 418.4 465.5 436.2 456.6 440.7 C449.8 444.5 423.4 458.4 416.0 463.5 C408.6 468.6 411.8 468.8 412.2 471.1 C412.6 473.4 414.9 476.0 418.5 477.5 C422.1 479.0 427.4 480.1 433.8 480.0 C440.2 479.9 448.6 478.4 456.6 476.7 C464.6 475.0 477.8 471.0 482.0 469.9 C493.8 463.3 541.2 437.1 553.0 430.5 C554.7 429.9 558.1 426.9 563.2 426.7 C568.3 426.5 578.0 427.8 583.5 429.3 C589.0 430.8 594.1 434.6 596.2 435.6 C575.1 448.7 490.5 501.2 469.3 514.3 C463.4 512.4 439.7 504.8 433.8 502.9 C436.6 501.0 447.6 493.3 450.3 491.4 C443.3 491.8 418.8 493.8 408.4 494.0 C398.0 494.2 394.4 494.0 388.0 492.7 C381.6 491.4 374.5 489.1 370.3 486.4 C366.1 483.6 363.6 479.6 362.7 476.2 C361.8 472.8 361.8 470.4 365.2 466.0 C368.6 461.6 380.0 452.3 383.0 449.6 C395.5 443.5 445.4 418.9 457.9 412.8"/></g>
<g stroke="#ff8000" stroke-width="2.6"><path d="M320.0 353.4 L326.2 348.8 L327.0 343.3 L343.4 341.7 L352.0 345.6 L346.6 352.6"/><path d="M614.0 308.0 C614.5 327.0 616.7 402.8 617.2 421.8 C618.5 424.5 620.8 434.1 625.0 438.0 C629.2 441.9 637.4 443.3 642.6 445.5 C647.8 447.7 652.8 448.4 656.2 451.2 C659.6 454.0 661.1 458.9 663.0 462.5 C664.9 466.1 664.9 470.4 667.5 472.7 C670.1 475.0 671.7 476.5 678.9 476.1 C686.1 475.7 701.9 471.6 710.6 470.5 C719.3 469.4 723.5 468.7 731.0 469.3 C738.5 469.9 750.4 472.0 755.9 473.9 C761.4 475.8 763.0 478.8 763.8 480.7 C764.5 482.6 761.0 484.4 760.4 485.2 C754.4 486.6 730.2 492.1 724.2 493.5 C718.2 495.4 696.9 500.8 687.9 504.9 C678.9 509.0 673.8 513.1 670.0 518.0 C666.2 522.9 665.9 527.0 665.3 534.3 C664.7 541.5 668.7 555.6 666.4 561.5 C664.1 567.4 657.8 569.0 651.7 569.4 C645.6 569.8 635.3 566.8 630.0 564.0 C624.7 561.2 622.4 557.9 620.0 552.4 C617.6 546.9 626.7 533.7 615.4 531.0 C604.1 528.3 563.9 535.0 552.0 536.0 C540.1 537.0 550.6 538.8 544.3 537.0 C538.0 535.2 520.0 527.3 514.0 525.0 C507.9 522.7 509.0 523.3 508.0 523.0 C509.1 522.2 513.7 518.8 514.8 518.0 C521.0 516.4 539.5 512.2 552.0 508.5 C564.5 504.8 581.7 499.2 590.0 496.0 C598.3 492.8 597.9 491.9 601.8 489.0 C605.7 486.1 610.6 483.2 613.2 478.4 C615.9 473.6 617.0 463.3 617.7 460.3 C617.6 453.9 617.3 428.2 617.2 421.8"/></g>
<g stroke="#00ff00" stroke-width="2.5"><path d="M437.8 286.6 L613.0 308.0 L793.4 362.2 L877.7 385.7"/><path d="M438.5 287.0 L458.2 412.7"/><path d="M793.4 362.2 L785.2 489.0 L783.0 505.0"/><path d="M617.8 398.0 L618.8 439.9"/><path d="M320.0 356.6 L331.7 357.3 L359.0 346.4 L351.2 343.3 L332.5 339.7 L326.2 341.0 L320.0 343.3"/><path d="M831.7 633.0 C824.8 629.6 800.6 619.4 790.0 612.8 C779.4 606.2 773.3 599.8 767.8 593.3 C762.2 586.8 759.0 579.9 756.7 573.9 C754.4 567.9 753.9 562.8 753.9 557.2 C753.9 551.6 754.4 547.0 756.7 540.5 C759.0 534.0 763.6 524.5 767.8 518.3 C772.0 512.0 774.8 508.3 781.7 503.0 C788.6 497.7 800.2 490.8 809.4 486.4 C818.6 482.0 827.7 479.1 837.0 476.7 C846.3 474.2 855.7 472.6 865.0 471.7 C874.3 470.8 883.5 470.5 892.8 471.1 C902.0 471.7 911.2 473.7 920.5 475.3 C929.8 476.9 939.0 478.5 948.3 480.8 C957.5 483.1 966.7 485.3 976.0 489.2 C985.3 493.1 996.6 499.2 1003.9 504.4 C1011.2 509.6 1017.3 517.8 1020.0 520.5"/><path d="M1020.0 546.1 C1012.5 544.5 982.2 538.0 974.7 536.4 C974.0 535.7 973.6 535.9 970.6 532.2 C967.6 528.5 963.7 519.3 956.7 514.2 C949.8 509.1 939.1 504.7 928.9 501.7 C918.7 498.7 906.2 496.1 895.6 496.1 C885.0 496.1 875.2 498.0 865.0 501.7 C854.8 505.4 841.8 512.8 834.4 518.3 C827.0 523.8 823.7 527.6 820.5 535.0 C817.3 542.4 815.5 555.8 815.0 562.8 C814.5 569.8 815.0 572.1 817.8 576.7 C820.6 581.3 825.2 586.4 831.7 590.6 C838.2 594.8 847.5 599.2 856.7 601.7 C866.0 604.2 877.0 606.0 887.2 605.8 C897.4 605.6 909.0 603.5 917.8 600.3 C926.6 597.1 936.3 588.7 940.0 586.4 C950.2 589.9 990.8 603.7 1001.0 607.2 C996.4 611.5 977.9 628.7 973.3 633.0"/><path d="M320.0 380.0 C323.8 378.7 335.9 373.0 342.7 372.0 C349.5 371.0 356.5 373.3 360.8 374.2 C365.1 375.1 367.4 377.0 368.7 377.6 C366.4 378.8 357.3 383.8 355.0 385.0 C361.6 384.7 388.2 383.5 394.8 383.2 C398.2 384.2 410.0 386.7 415.0 389.0 C420.0 391.3 423.9 394.2 424.7 396.8 C425.5 399.4 423.2 402.2 419.7 404.8 C416.2 407.4 413.6 407.4 403.8 412.7 C394.0 418.0 374.8 429.5 360.8 436.5 C346.8 443.5 326.8 451.6 320.0 454.6"/><path d="M320.0 400.2 C325.3 399.1 342.6 394.4 351.7 393.4 C360.8 392.3 369.4 392.9 374.4 393.9 C379.4 394.9 381.2 397.8 381.6 399.6 C382.0 401.4 383.1 401.5 376.6 404.8 C370.1 408.1 352.1 415.2 342.7 419.5 C333.3 423.8 323.8 428.9 320.0 430.8"/><path d="M457.9 412.8 C459.4 411.9 462.8 409.0 466.8 407.7 C470.8 406.4 476.9 405.0 482.0 405.2 C487.1 405.4 492.6 407.5 497.2 409.0 C501.8 410.5 507.8 413.2 509.9 414.0 C501.0 418.4 465.5 436.2 456.6 440.7 C449.8 444.5 423.4 458.4 416.0 463.5 C408.6 468.6 411.8 468.8 412.2 471.1 C412.6 473.4 414.9 476.0 418.5 477.5 C422.1 479.0 427.4 480.1 433.8 480.0 C440.2 479.9 448.6 478.4 456.6 476.7 C464.6 475.0 477.8 471.0 482.0 469.9 C493.8 463.3 541.2 437.1 553.0 430.5 C554.7 429.9 558.1 426.9 563.2 426.7 C568.3 426.5 578.0 427.8 583.5 429.3 C589.0 430.8 594.1 434.6 596.2 435.6 C575.1 448.7 490.5 501.2 469.3 514.3 C463.4 512.4 439.7 504.8 433.8 502.9 C436.6 501.0 447.6 493.3 450.3 491.4 C443.3 491.8 418.8 493.8 408.4 494.0 C398.0 494.2 394.4 494.0 388.0 492.7 C381.6 491.4 374.5 489.1 370.3 486.4 C366.1 483.6 363.6 479.6 362.7 476.2 C361.8 472.8 361.8 470.4 365.2 466.0 C368.6 461.6 380.0 452.3 383.0 449.6 C395.5 443.5 445.4 418.9 457.9 412.8"/><path d="M618.8 439.9 C625.8 441.8 653.7 449.3 660.7 451.2 C661.3 455.9 663.8 474.7 664.4 479.4 C667.0 478.6 670.1 476.8 680.0 474.7 C689.9 472.6 711.8 467.4 723.8 466.9 C735.8 466.4 743.6 469.5 751.9 471.6 C760.2 473.7 770.1 478.1 773.8 479.4 C768.5 481.0 747.5 487.4 742.3 489.0 C729.5 492.4 678.1 506.0 665.3 509.4 C665.5 520.5 666.2 565.1 666.4 576.2 C658.1 573.6 624.9 563.0 616.6 560.4 C616.4 554.0 615.6 528.2 615.4 521.8 C604.8 524.4 562.6 535.1 552.0 537.7 C550.7 537.9 550.9 540.1 544.3 538.8 C537.7 537.5 520.9 532.5 512.6 529.8 C504.3 527.1 497.4 523.7 494.4 522.5 C498.2 521.2 513.3 516.2 517.1 515.0 C533.5 511.2 599.0 496.2 615.4 492.4 C616.0 483.6 618.2 448.6 618.8 439.9"/></g>
</svg>

<div class="t" style="left:42px;top:12px;color:#fff;font-size:15px;line-height:18px">  X:   47.310
  Y:    3.296
  Z:    3.000
Vel:    0.000</div>
</div>
<!-- zoom button -->
<div class="a" style="left:323px;top:634px;width:87px;height:33px;border:2px solid;border-color:#fff #888 #888 #fff"></div>
<div class="t" style="left:336px;top:643px">ZOOM +</div>
<!-- ===== gcodes ===== -->
<div class="t" style="left:595px;top:678px">Active G-Codes:</div>
<div class="a" style="left:317px;top:698px;width:707px;height:44px;background:#4f4f4f"></div>
<div class="t" style="left:320px;top:701px;color:#c6e0ff;font-weight:bold;line-height:19px">G1 G17 G40 G21 G90 G94 G54 G49 G99 G64 G97 G91.1 G8 G92.2 M2 M5 M9 M48
M53 M0 F0 S10000</div>
</body></html>
